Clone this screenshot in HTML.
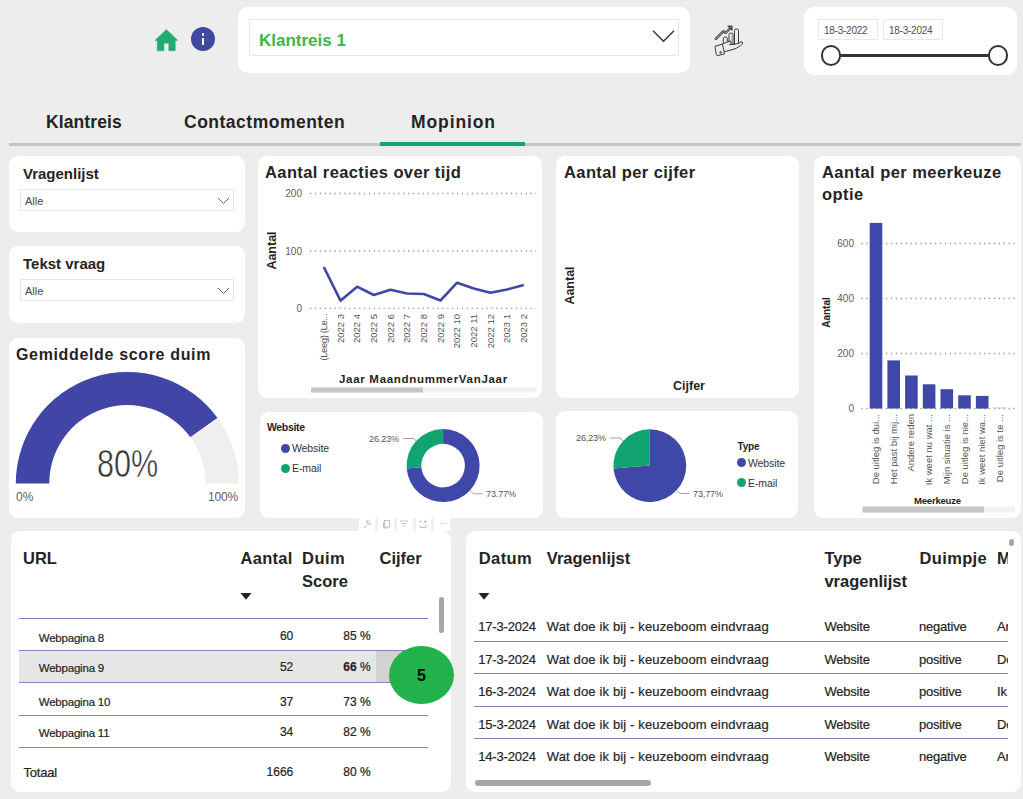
<!DOCTYPE html>
<html><head><meta charset="utf-8">
<style>
*{box-sizing:border-box;margin:0;padding:0}
html,body{width:1023px;height:799px;overflow:hidden}
body{background:#ededed;position:relative;font-family:"Liberation Sans",sans-serif;color:#252423}
.a{position:absolute}
.card{position:absolute;background:#fff;border-radius:9px}
.t{position:absolute;white-space:nowrap;line-height:1}
.b{font-weight:bold}

.xl{position:absolute;width:80px;height:10px;line-height:10px;font-size:9.5px;color:#555;text-align:right;white-space:nowrap;transform-origin:100% 0;transform:rotate(-90deg)}
.yl{position:absolute;width:40px;line-height:11px;height:11px;font-size:10px;color:#605e5c;text-align:right;white-space:nowrap}
.inp{position:absolute;border:1px solid #e6e6e6;background:#fff}

.hd{position:absolute;white-space:nowrap;line-height:1;font-weight:bold;font-size:16.5px;color:#252423}
.cl{position:absolute;white-space:nowrap;line-height:1;font-size:11.5px;letter-spacing:-0.2px;color:#252423;-webkit-text-stroke:0.2px #252423}
.nr{position:absolute;white-space:nowrap;line-height:1;font-size:12px;color:#252423;text-align:right;width:60px;-webkit-text-stroke:0.2px #252423}
.rl{position:absolute;height:1px;background:#7e83c9}
</style></head><body>

<!-- top row -->
<svg class="a" style="left:154px;top:28px" width="25" height="24" viewBox="0 0 25 24"><path d="M12.4 1.5 L0.8 12.6 H3.2 V22.8 H10 V15.2 H14.8 V22.8 H21.3 V12.6 H24 Z" fill="#1fab72" stroke="#1fab72" stroke-width="0.4" stroke-linejoin="round"/></svg>
<div class="a" style="left:191px;top:27px;width:24px;height:24px;border-radius:50%;background:#4148a0"></div>
<div class="a" style="left:201.5px;top:33px;width:2.7px;height:2.8px;border-radius:1px;background:#fff"></div>
<div class="a" style="left:201.5px;top:38px;width:2.7px;height:7px;border-radius:0.5px;background:#fff"></div>

<div class="card" style="left:238px;top:7px;width:452px;height:66px;border-radius:10px"></div>
<div class="a" style="left:249px;top:19px;width:430px;height:37px;border:1px solid #e8e8e8"></div>
<div class="t b" id="klant1" style="left:259px;top:32px;font-size:17px;color:#3cb54a">Klantreis 1</div>
<svg class="a" style="left:651px;top:29px" width="24" height="14" viewBox="0 0 24 14"><path d="M2 1.8 L12.5 12.2 L23 1.8" fill="none" stroke="#333" stroke-width="1.4"/></svg>

<svg class="a" style="left:708px;top:20px" width="40" height="40" viewBox="0 0 40 40" fill="none" stroke="#3a3a3a" stroke-width="1" stroke-linejoin="round" stroke-linecap="round">
<path d="M7.8 18.8 L15.5 11.2 L17.5 13 L22.5 8.2" stroke-width="2.4"/><path d="M7.8 18.8 L15.5 11.2 L17.5 13 L22.5 8.2" stroke="#ededed" stroke-width="0.7"/>
<path d="M20 6.2 L24 6 L24 10 Z" fill="#9a9a9a" stroke-width="1.1"/>
<path d="M15.3 23 V18.5 Q15.3 17 17.2 17 Q19.3 17 19.3 18.5 V21.5"/>
<path d="M21 22 V14.5 Q21 13 23 13 Q25 13 25 14.5 V24.5" /><path d="M24.2 15 V24.3" stroke="#999" stroke-width="1.2"/>
<path d="M26.5 24.5 V10.5 Q26.5 9 28.5 9 Q30.5 9 30.5 10.5 V23.5"/>
<path d="M7.6 26.2 L14.4 24 L16.6 33.8 L9.8 35.6 Q8.6 35.8 8.4 34.8 L7 27.6 Q6.8 26.5 7.6 26.2 Z"/>
<circle cx="12.6" cy="32.4" r="0.9"/>
<path d="M14.6 24 L21 21.2 Q23.5 20.5 23.2 22.5 Q22.8 24.6 21.5 24.8 L30.5 23.5 L33 21.8 Q34.6 21.5 34.6 23 Q34.4 24.4 32.5 25.6 Q28.5 28.6 25 29.5 L16.8 31.6"/>
</svg>

<div class="card" style="left:804px;top:7px;width:213px;height:68px;border-radius:10px"></div>
<div class="a" style="left:818px;top:19px;width:60px;height:21px;border:1px solid #e8e8e8"></div>
<div class="a" style="left:883px;top:19px;width:60px;height:21px;border:1px solid #e8e8e8"></div>
<div class="t" style="left:824px;top:25.5px;font-size:10px;color:#505050;letter-spacing:-0.25px">18-3-2022</div>
<div class="t" style="left:889px;top:25.5px;font-size:10px;color:#505050;letter-spacing:-0.25px">18-3-2024</div>
<div class="a" style="left:831px;top:53.7px;width:167px;height:3px;background:#333"></div>
<div class="a" style="left:820.8px;top:45.4px;width:20.5px;height:20.5px;border-radius:50%;background:#fff;border:2.3px solid #333"></div>
<div class="a" style="left:987.5px;top:45.4px;width:20.5px;height:20.5px;border-radius:50%;background:#fff;border:2.3px solid #333"></div>

<!-- tabs -->
<div class="a" style="left:9px;top:143px;width:1012px;height:3px;background:#c6c6ca"></div>
<div class="a" style="left:380px;top:142px;width:145px;height:4px;background:#13a36f"></div>
<div class="t b" id="tab1" style="left:46px;top:114px;font-size:17.5px;letter-spacing:0.1px">Klantreis</div>
<div class="t b" id="tab2" style="left:184px;top:114px;font-size:17.5px;letter-spacing:0.5px">Contactmomenten</div>
<div class="t b" id="tab3" style="left:411px;top:114px;font-size:17.5px;letter-spacing:0.9px">Mopinion</div>

<!-- cards -->
<div class="card" style="left:9px;top:156px;width:236px;height:76px"></div>
<div class="card" style="left:9px;top:246px;width:236px;height:77px"></div>
<div class="card" style="left:9px;top:338px;width:236px;height:180px"></div>
<div class="card" style="left:258px;top:156px;width:284px;height:242px"></div>
<div class="card" style="left:556px;top:156px;width:243px;height:242px"></div>
<div class="card" style="left:814px;top:156px;width:207px;height:362px"></div>
<div class="card" style="left:260px;top:412px;width:283px;height:106px"></div>
<div class="card" style="left:556px;top:411px;width:242px;height:107px"></div>
<div class="card" style="left:11px;top:531px;width:440px;height:261px"></div>
<div class="card" style="left:466px;top:531px;width:555px;height:261px"></div>


<!-- slicers -->
<div class="t b" id="vragen" style="left:23px;top:166px;font-size:15px">Vragenlijst</div>
<div class="inp" style="left:20px;top:189px;width:214px;height:22px"></div>
<div class="t" id="alle1" style="left:25px;top:196px;font-size:11px;color:#444">Alle</div>
<svg class="a" style="left:217px;top:197px" width="13" height="8" viewBox="0 0 13 8"><path d="M1 1 L6.5 6.5 L12 1" fill="none" stroke="#605e5c" stroke-width="1"/></svg>

<div class="t b" id="tekst" style="left:23px;top:256px;font-size:15px">Tekst vraag</div>
<div class="inp" style="left:20px;top:279px;width:214px;height:22px"></div>
<div class="t" id="alle2" style="left:25px;top:286px;font-size:11px;color:#444">Alle</div>
<svg class="a" style="left:217px;top:287px" width="13" height="8" viewBox="0 0 13 8"><path d="M1 1 L6.5 6.5 L12 1" fill="none" stroke="#605e5c" stroke-width="1"/></svg>

<!-- gauge -->
<div class="t b" id="gem" style="left:16px;top:347px;font-size:16px;letter-spacing:0.65px">Gemiddelde score duim</div>
<svg class="a" style="left:0;top:0" width="260" height="520" viewBox="0 0 260 520">
<path d="M15.8 483.4 A111.5 111.5 0 0 1 217.5 417.9 L190.4 437.2 A78 78 0 0 0 49.3 483.4 Z" fill="#4045a6"/>
<path d="M217.5 417.9 A111.5 111.5 0 0 1 238.8 483.4 L205.3 483.4 A78 78 0 0 0 190.4 437.2 Z" fill="#f0efee"/>
</svg>
<div class="t" id="g80" style="left:97px;top:444.6px;font-size:38px;color:#333;-webkit-text-stroke:0.5px #fff;transform-origin:0 0;transform:scaleX(0.805)">80%</div>
<div class="t" id="g0" style="left:16px;top:491px;font-size:12px;color:#605e5c">0%</div>
<div class="t" id="g100" style="left:208px;top:491px;font-size:12px;letter-spacing:-0.2px;color:#605e5c">100%</div>

<!-- line chart -->
<div class="t b" id="reac" style="left:265px;top:164px;font-size:16.5px;letter-spacing:0.4px">Aantal reacties over tijd</div>
<div class="yl" style="left:262px;top:188px">200</div>
<div class="yl" style="left:262px;top:245.5px">100</div>
<div class="yl" style="left:262px;top:302.5px">0</div>
<div class="t b" id="aant1" style="left:248px;top:244px;width:48px;height:13px;line-height:13px;font-size:12.5px;text-align:center;transform:rotate(-90deg)">Aantal</div>
<svg class="a" style="left:0;top:0" width="1023" height="799" viewBox="0 0 1023 799">
<g stroke="#999" stroke-width="1.3" stroke-dasharray="1.3 3.6">
<line x1="310" y1="193.5" x2="536" y2="193.5"/><line x1="310" y1="251" x2="536" y2="251"/><line x1="310" y1="308.3" x2="536" y2="308.3"/>
</g>
<polyline fill="none" stroke="#3f47a8" stroke-width="2.6" stroke-linejoin="round" points="323.8,267.0 340.5,300.7 357.1,286.7 373.8,295.0 390.5,289.7 407.1,293.5 423.8,294.0 440.5,300.5 457.1,282.7 473.8,288.5 490.5,292.7 507.1,289.5 523.8,285.0"/>
<rect x="311" y="387.5" width="226" height="5" fill="#f1f1f1"/>
<rect x="311" y="387.5" width="112" height="5" fill="#c6c6c6"/>
</svg>
<div class="xl" style="left:238.8px;top:314px;letter-spacing:-0.4px">(Leeg) (Le...</div>
<div class="xl" style="left:255.5px;top:314px">2022 3</div>
<div class="xl" style="left:272.1px;top:314px">2022 4</div>
<div class="xl" style="left:288.8px;top:314px">2022 5</div>
<div class="xl" style="left:305.5px;top:314px">2022 6</div>
<div class="xl" style="left:322.1px;top:314px">2022 7</div>
<div class="xl" style="left:338.8px;top:314px">2022 8</div>
<div class="xl" style="left:355.5px;top:314px">2022 9</div>
<div class="xl" style="left:372.1px;top:314px">2022 10</div>
<div class="xl" style="left:388.8px;top:314px">2022 11</div>
<div class="xl" style="left:405.5px;top:314px">2022 12</div>
<div class="xl" style="left:422.1px;top:314px">2023 1</div>
<div class="xl" style="left:438.8px;top:314px">2023 2</div>
<div class="t b" id="jaar" style="left:339px;top:374px;font-size:11.5px;letter-spacing:0.7px">Jaar MaandnummerVanJaar</div>

<!-- cijfer -->
<div class="t b" id="cijt" style="left:564px;top:164px;font-size:16.5px;letter-spacing:0.4px">Aantal per cijfer</div>
<div class="t b" id="aant2" style="left:546px;top:279px;width:48px;height:13px;line-height:13px;font-size:12.5px;text-align:center;transform:rotate(-90deg)">Aantal</div>
<div class="t b" id="cijf" style="left:673px;top:380px;font-size:12.5px">Cijfer</div>


<!-- meerkeuze -->
<div class="t b" id="meer1" style="left:822px;top:164px;font-size:16.5px;letter-spacing:0.45px">Aantal per meerkeuze</div>
<div class="t b" id="meer2" style="left:822px;top:186px;font-size:16.5px;letter-spacing:0.45px">optie</div>
<div class="yl" style="left:814px;top:238.0px">600</div>
<div class="yl" style="left:814px;top:293.0px">400</div>
<div class="yl" style="left:814px;top:348.0px">200</div>
<div class="yl" style="left:814px;top:403.0px">0</div>
<div class="t b" id="aant3" style="left:806px;top:307px;width:40px;height:11px;line-height:11px;font-size:10px;text-align:center;transform:rotate(-90deg)">Aantal</div>
<svg class="a" style="left:0;top:0" width="1023" height="799" viewBox="0 0 1023 799">
<g stroke="#999" stroke-width="1.3" stroke-dasharray="1.3 3.6">
<line x1="861.5" y1="243.5" x2="1015" y2="243.5"/>
<line x1="861.5" y1="298.5" x2="1015" y2="298.5"/>
<line x1="861.5" y1="353.5" x2="1015" y2="353.5"/>
<line x1="861.5" y1="408.5" x2="1015" y2="408.5"/>
</g>
<rect x="869.7" y="222.9" width="12.6" height="185.6" fill="#3f47a8"/>
<rect x="887.4" y="360.4" width="12.6" height="48.1" fill="#3f47a8"/>
<rect x="905.1" y="375.5" width="12.6" height="33.0" fill="#3f47a8"/>
<rect x="922.8" y="384.3" width="12.6" height="24.2" fill="#3f47a8"/>
<rect x="940.5" y="389.2" width="12.6" height="19.2" fill="#3f47a8"/>
<rect x="958.2" y="395.3" width="12.6" height="13.2" fill="#3f47a8"/>
<rect x="975.9" y="395.9" width="12.6" height="12.7" fill="#3f47a8"/>
<rect x="993.6" y="407.4" width="12.6" height="1.1" fill="#c5c8e8"/>
<rect x="862.5" y="506.5" width="152.5" height="6" fill="#f1f1f1"/>
<rect x="862.5" y="506.5" width="121.5" height="6" fill="#c6c6c6"/>
<path d="M443.10 429.10 A36.5 36.5 0 1 1 406.71 468.42 L421.37 467.28 A21.8 21.8 0 1 0 443.10 443.80 Z" fill="#3f47a8"/>
<path d="M406.71 468.42 A36.5 36.5 0 0 1 443.10 429.10 L443.10 443.80 A21.8 21.8 0 0 0 421.37 467.28 Z" fill="#11a370"/>
<path d="M649.8 465.6 L649.80 429.20 A36.4 36.4 0 1 1 613.51 468.41 Z" fill="#3f47a8"/>
<path d="M649.8 465.6 L613.51 468.41 A36.4 36.4 0 0 1 649.80 429.20 Z" fill="#11a370"/>
<g fill="none" stroke="#a0a0a0" stroke-width="1">
<polyline points="403.3,438.5 413.9,438.5 416.5,441.5"/>
<polyline points="470.5,491 473.5,493.8 482.6,493.8"/>
<polyline points="610,438 620,438 623,441"/>
<polyline points="677,491 680,493.5 689,493.5"/>
</g>
</svg>
<div class="xl" style="left:791.0px;top:414px;height:10px;font-size:9.5px">De uitleg is dui...</div>
<div class="xl" style="left:808.7px;top:414px;height:10px;font-size:9.5px">Het past bij mij...</div>
<div class="xl" style="left:826.4px;top:414px;height:10px;font-size:9.5px">Andere reden</div>
<div class="xl" style="left:844.1px;top:414px;height:10px;font-size:9.5px">Ik weet nu wat ...</div>
<div class="xl" style="left:861.8px;top:414px;height:10px;font-size:9.5px">Mijn situatie is ...</div>
<div class="xl" style="left:879.5px;top:414px;height:10px;font-size:9.5px">De uitleg is nie...</div>
<div class="xl" style="left:897.2px;top:414px;height:10px;font-size:9.5px">Ik weet niet wa...</div>
<div class="xl" style="left:914.9px;top:414px;height:10px;font-size:9.5px">De uitleg is te ...</div>
<div class="t b" id="meerk" style="left:914px;top:496px;font-size:9.5px;letter-spacing:-0.2px">Meerkeuze</div>

<!-- donut -->
<div class="t b" id="webt" style="left:267px;top:421.5px;font-size:10.5px;letter-spacing:-0.35px">Website</div>
<div class="a" style="left:281px;top:444px;width:9px;height:9px;border-radius:50%;background:#3f47a8"></div>
<div class="t" id="web1" style="left:292px;top:442.5px;font-size:10.5px;color:#333;letter-spacing:-0.1px">Website</div>
<div class="a" style="left:281px;top:464px;width:9px;height:9px;border-radius:50%;background:#11a370"></div>
<div class="t" id="em1" style="left:292px;top:462.5px;font-size:10.5px;color:#333;letter-spacing:-0.1px">E-mail</div>
<div class="t" id="p26a" style="left:369px;top:435px;font-size:9px;color:#555;letter-spacing:-0.1px">26.23%</div>
<div class="t" id="p73a" style="left:486px;top:490px;font-size:9px;color:#555;letter-spacing:-0.1px">73.77%</div>
<!-- pie -->
<div class="t" id="p26b" style="left:576px;top:434px;font-size:9px;color:#555;letter-spacing:-0.1px">26,23%</div>
<div class="t" id="p73b" style="left:693px;top:490px;font-size:9px;color:#555;letter-spacing:-0.1px">73,77%</div>
<div class="t b" id="typet" style="left:737.5px;top:442px;font-size:10px;letter-spacing:-0.2px">Type</div>
<div class="a" style="left:737px;top:458px;width:9px;height:9px;border-radius:50%;background:#3f47a8"></div>
<div class="t" id="web2" style="left:748px;top:457.5px;font-size:10.5px;color:#333;letter-spacing:-0.1px">Website</div>
<div class="a" style="left:737px;top:478px;width:9px;height:9px;border-radius:50%;background:#11a370"></div>
<div class="t" id="em2" style="left:748px;top:477.5px;font-size:10.5px;color:#333;letter-spacing:-0.1px">E-mail</div>


<!-- URL table -->
<div class="hd" id="h_url" style="left:23px;top:550px">URL</div>
<div class="hd" id="h_aant" style="left:240.5px;top:550px;letter-spacing:0.3px">Aantal</div>
<div class="hd" id="h_duim" style="left:302px;top:550px;letter-spacing:0.5px">Duim</div>
<div class="hd" id="h_score" style="left:302px;top:572.5px">Score</div>
<div class="hd" id="h_cijf" style="left:379.5px;top:550px">Cijfer</div>
<svg class="a" style="left:240px;top:592.5px" width="12" height="7" viewBox="0 0 12 7"><path d="M0.5 0 H11.5 L6 6.8 Z" fill="#252423"/></svg>
<div class="rl" style="left:19px;top:618px;width:409px"></div>
<div class="a" style="left:19px;top:650.5px;width:409px;height:32px;background:#e6e6e6"></div>
<div class="a" style="left:376px;top:651px;width:52px;height:31px;background:#d2d2d2"></div>
<div class="rl" style="left:19px;top:650px;width:409px"></div>
<div class="rl" style="left:19px;top:682px;width:409px"></div>
<div class="rl" style="left:19px;top:715px;width:409px"></div>
<div class="rl" style="left:19px;top:747px;width:409px"></div>
<div class="cl" id="r_w8" style="left:38.7px;top:633px">Webpagina 8</div>
<div class="cl" id="r_w9" style="left:38.7px;top:663px">Webpagina 9</div>
<div class="cl" id="r_w10" style="left:38.7px;top:697px">Webpagina 10</div>
<div class="cl" id="r_w11" style="left:38.7px;top:728px">Webpagina 11</div>
<div class="nr" id="n60" style="left:233.3px;top:630px">60</div>
<div class="nr" style="left:233.3px;top:661px">52</div>
<div class="nr" style="left:233.3px;top:695.5px">37</div>
<div class="nr" style="left:233.3px;top:726px">34</div>
<div class="nr" id="p85" style="left:310.6px;top:630px">85 %</div>
<div class="nr" style="left:310.6px;top:661px"><b>66</b> %</div>
<div class="nr" style="left:310.6px;top:695.5px">73 %</div>
<div class="nr" style="left:310.6px;top:726px">82 %</div>
<div class="cl" id="totaal" style="left:23.4px;top:766px;font-size:13px">Totaal</div>
<div class="nr" id="n1666" style="left:233.3px;top:765.5px">1666</div>
<div class="nr" style="left:310.6px;top:765.5px">80 %</div>
<div class="a" style="left:439px;top:597px;width:4.6px;height:35.5px;border-radius:2.3px;background:#a6a6a6"></div>
<div class="a" style="left:388.7px;top:645.8px;width:65px;height:58px;border-radius:50%;background:#21b24b"></div>
<div class="t b" id="five" style="left:417px;top:668px;font-size:16px;color:#000">5</div>

<!-- Datum table -->
<div class="a" style="left:466px;top:531px;width:555px;height:261px;overflow:hidden;border-radius:9px">
</div>
<div class="hd" id="h_dat" style="left:478.8px;top:550px;letter-spacing:0.4px">Datum</div>
<div class="hd" id="h_vrl" style="left:546.8px;top:550px">Vragenlijst</div>
<div class="hd" id="h_type" style="left:824.4px;top:550px">Type</div>
<div class="hd" id="h_vrl2" style="left:824.4px;top:572.5px">vragenlijst</div>
<div class="hd" id="h_duimp" style="left:919.5px;top:550px;letter-spacing:0.35px">Duimpje</div>
<div class="a" style="left:996px;top:545px;width:12.2px;height:30px;overflow:hidden"><div class="hd" style="left:0.9px;top:5px">M</div></div>
<svg class="a" style="left:478.3px;top:592.5px" width="12" height="7" viewBox="0 0 12 7"><path d="M0.5 0 H11.5 L6 6.8 Z" fill="#252423"/></svg>
<div class="a" style="left:1009.3px;top:539px;width:4.7px;height:6.7px;border-radius:2.3px;background:#a6a6a6"></div>
<div class="a" style="left:474.5px;top:780.3px;width:176.7px;height:6px;border-radius:3px;background:#a6a6a6"></div>
<div class="rl" style="left:474px;top:641px;width:534px"></div>
<div class="rl" style="left:474px;top:673px;width:534px"></div>
<div class="rl" style="left:474px;top:706px;width:534px"></div>
<div class="rl" style="left:474px;top:738px;width:534px"></div>
<div class="cl" id="d_row1" style="left:478.3px;top:620.0px;font-size:13px">17-3-2024</div>
<div class="cl" id="d_wat1" style="left:546.8px;top:620.0px;font-size:13px;letter-spacing:0.14px">Wat doe ik bij - keuzeboom eindvraag</div>
<div class="cl" id="d_web1" style="left:824.4px;top:620.0px;font-size:13px">Website</div>
<div class="cl" id="d_neg1" style="left:919px;top:620.0px;font-size:13px">negative</div>
<div class="a" style="left:996px;top:618.0px;width:12px;height:18px;overflow:hidden"><div class="cl" style="left:1px;top:2px;font-size:13px">An</div></div>
<div class="cl" style="left:478.3px;top:653.0px;font-size:13px">17-3-2024</div>
<div class="cl" style="left:546.8px;top:653.0px;font-size:13px;letter-spacing:0.14px">Wat doe ik bij - keuzeboom eindvraag</div>
<div class="cl" style="left:824.4px;top:653.0px;font-size:13px">Website</div>
<div class="cl" style="left:919px;top:653.0px;font-size:13px">positive</div>
<div class="a" style="left:996px;top:651.0px;width:12px;height:18px;overflow:hidden"><div class="cl" style="left:1px;top:2px;font-size:13px">De</div></div>
<div class="cl" style="left:478.3px;top:685.3px;font-size:13px">16-3-2024</div>
<div class="cl" style="left:546.8px;top:685.3px;font-size:13px;letter-spacing:0.14px">Wat doe ik bij - keuzeboom eindvraag</div>
<div class="cl" style="left:824.4px;top:685.3px;font-size:13px">Website</div>
<div class="cl" style="left:919px;top:685.3px;font-size:13px">positive</div>
<div class="a" style="left:996px;top:683.3px;width:12px;height:18px;overflow:hidden"><div class="cl" style="left:1px;top:2px;font-size:13px">Ik</div></div>
<div class="cl" style="left:478.3px;top:717.5px;font-size:13px">15-3-2024</div>
<div class="cl" style="left:546.8px;top:717.5px;font-size:13px;letter-spacing:0.14px">Wat doe ik bij - keuzeboom eindvraag</div>
<div class="cl" style="left:824.4px;top:717.5px;font-size:13px">Website</div>
<div class="cl" style="left:919px;top:717.5px;font-size:13px">positive</div>
<div class="a" style="left:996px;top:715.5px;width:12px;height:18px;overflow:hidden"><div class="cl" style="left:1px;top:2px;font-size:13px">De</div></div>
<div class="cl" style="left:478.3px;top:749.6px;font-size:13px">14-3-2024</div>
<div class="cl" style="left:546.8px;top:749.6px;font-size:13px;letter-spacing:0.14px">Wat doe ik bij - keuzeboom eindvraag</div>
<div class="cl" style="left:824.4px;top:749.6px;font-size:13px">Website</div>
<div class="cl" style="left:919px;top:749.6px;font-size:13px">negative</div>
<div class="a" style="left:996px;top:747.6px;width:12px;height:18px;overflow:hidden"><div class="cl" style="left:1px;top:2px;font-size:13px">An</div></div>

<!-- toolbar -->
<div class="a" style="left:358.8px;top:518.3px;width:91.5px;height:12.2px;background:#f0f0f0"></div>
<div class="a" style="left:359.1px;top:518px;width:15.8px;height:12.5px;background:#fff"></div>
<div class="a" style="left:377.9px;top:518px;width:16.4px;height:12.5px;background:#fff"></div>
<div class="a" style="left:396.9px;top:518px;width:16.4px;height:12.5px;background:#fff"></div>
<div class="a" style="left:415.7px;top:518px;width:15.8px;height:12.5px;background:#fff"></div>
<div class="a" style="left:434.2px;top:518px;width:16.1px;height:12.5px;background:#fff"></div>
<svg class="a" style="left:358px;top:517px" width="93" height="14" viewBox="0 0 93 14" fill="none" stroke="#b4b4b4" stroke-width="0.8">
<path d="M6 11 L9 8 M8 4.5 L11.5 8 M9.5 3 L13 6.5 L11 7.5 L8.5 5 Z"/>
<rect x="26.5" y="3.5" width="5" height="6.5"/><path d="M25.5 5 V11 H30"/>
<path d="M42 4 H50 M43.5 6.5 H48.5 M45 9 H47"/>
<path d="M62 6 V4 H64 M62 8 V10.5 H68 V8 M66 4 H68 V6 M65.5 6.5 L68 4"/>
<circle cx="82.3" cy="6.5" r="0.5" fill="#999" stroke="none"/><circle cx="85" cy="6.5" r="0.5" fill="#999" stroke="none"/><circle cx="87.7" cy="6.5" r="0.5" fill="#999" stroke="none"/>
</svg>

</body></html>
